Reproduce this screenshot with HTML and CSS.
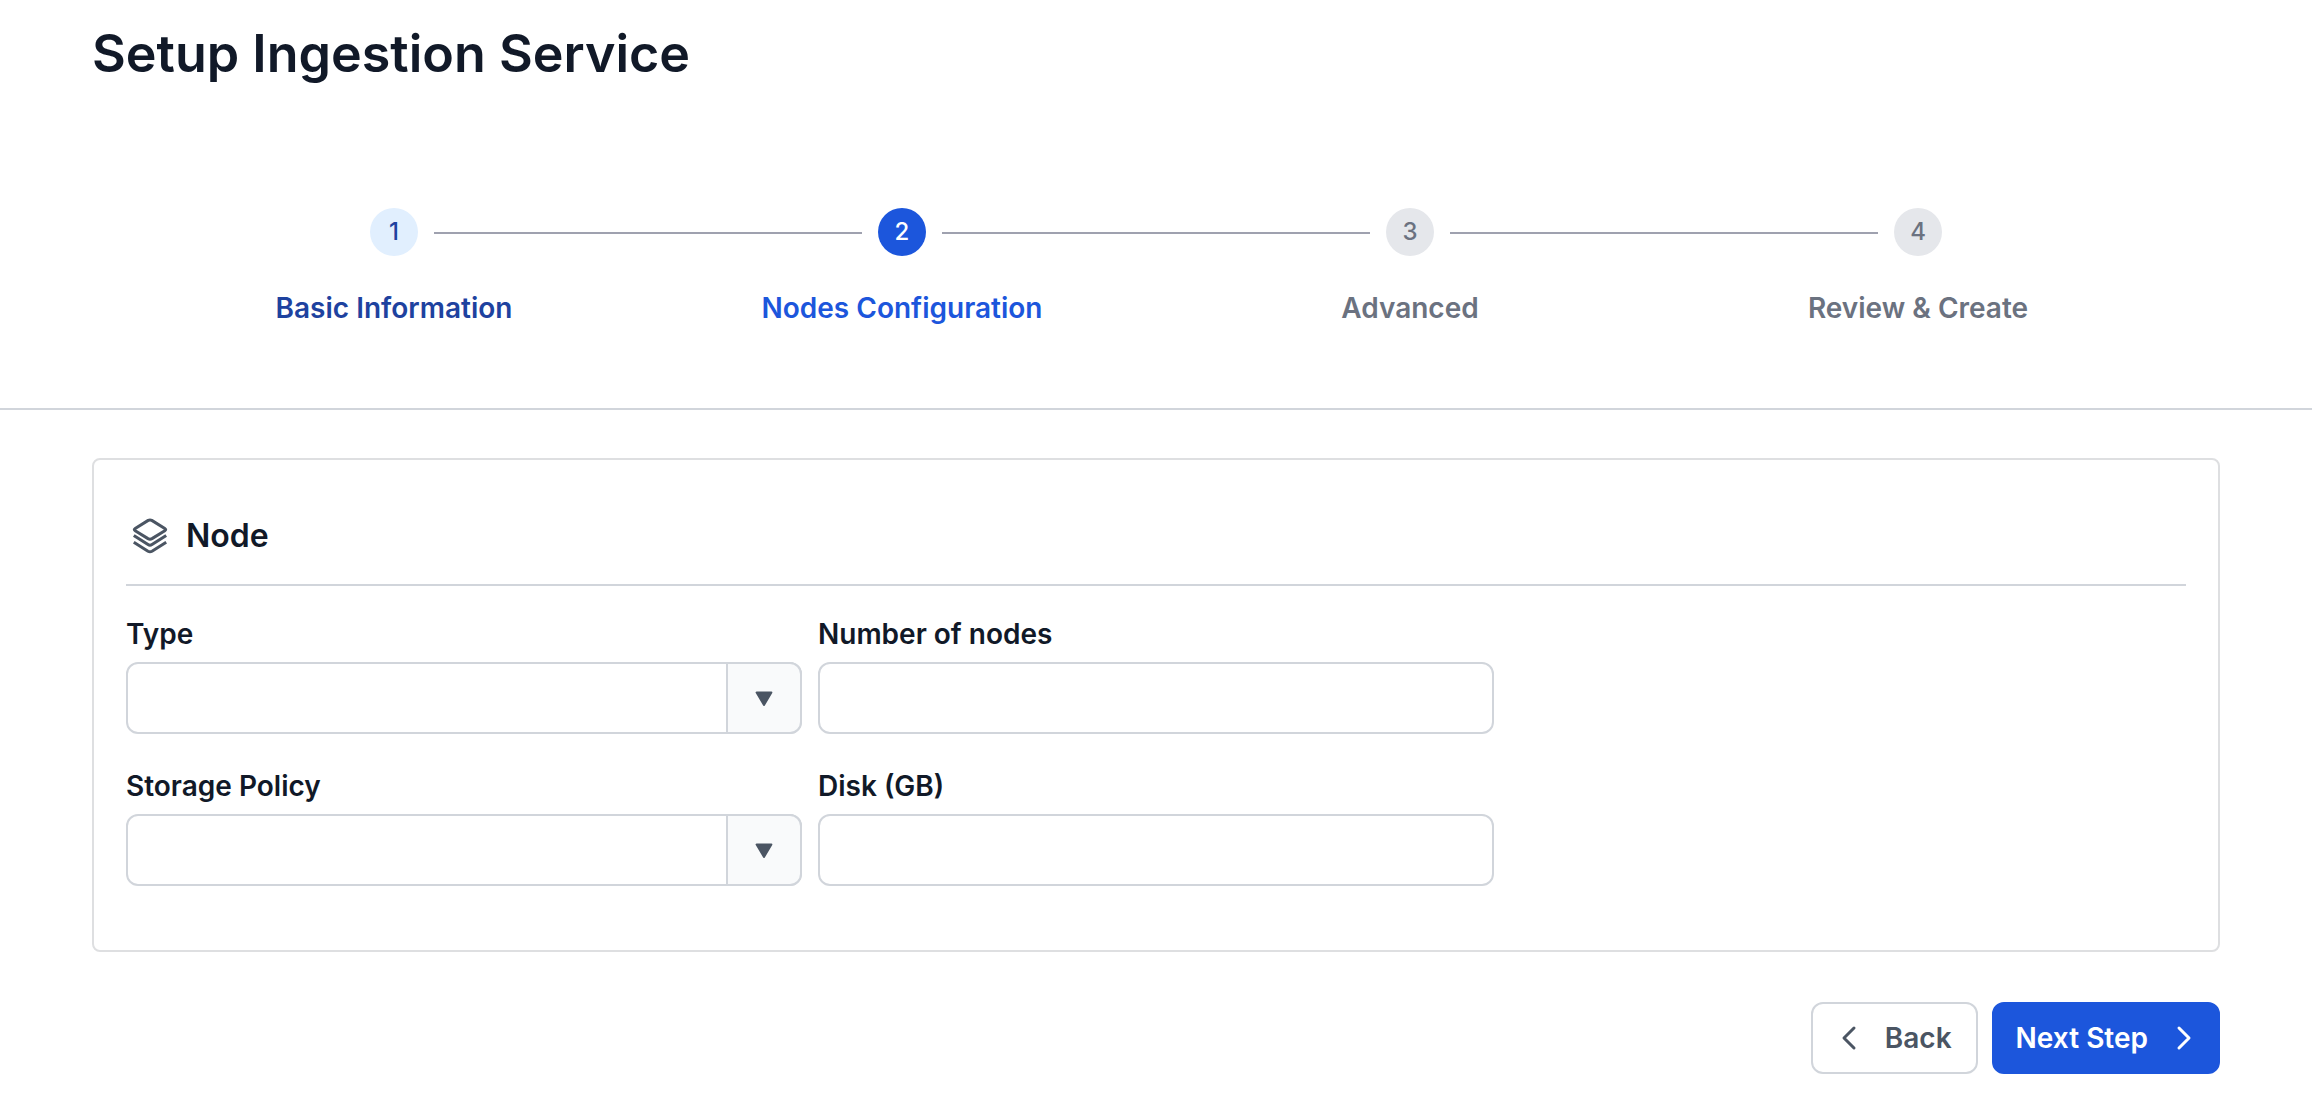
FILE: index.html
```html
<!DOCTYPE html>
<html lang="en">
<head>
<meta charset="utf-8">
<meta name="viewport" content="width=device-width, initial-scale=1">
<title>Setup Ingestion Service</title>
<link rel="stylesheet" href="styles.css">
</head>
<body>
<header class="page-header">
  <h1 class="page-title">Setup Ingestion Service</h1>
  <ol class="stepper">
    <li class="step step-done">
      <div class="step-track"><span class="step-number">1</span></div>
      <span class="step-label">Basic Information</span>
    </li>
    <li class="step step-current" aria-current="step">
      <div class="step-track"><span class="step-number">2</span></div>
      <span class="step-label">Nodes Configuration</span>
    </li>
    <li class="step">
      <div class="step-track"><span class="step-number">3</span></div>
      <span class="step-label">Advanced</span>
    </li>
    <li class="step">
      <div class="step-track"><span class="step-number">4</span></div>
      <span class="step-label">Review &amp; Create</span>
    </li>
  </ol>
</header>
<main class="page-main">
  <form class="form">
    <section class="card">
      <div class="card-header">
        <svg class="card-icon" viewBox="0 0 40 40" aria-hidden="true">
          <path d="M18.2 4.400 L5.200 12.400 Q3.400 13.600 5.200 14.800 L18 22.600 Q20 23.700 22 22.600 L34.800 14.800 Q36.600 13.600 34.800 12.400 L21.800 4.400 Q20 3.500 18.200 4.400 Z"/>
          <path d="M3.800 19.400 L18 28.600 Q20 29.900 22 28.600 L36.200 19.400"/>
          <path d="M3.800 26.200 L18 35.200 Q20 36.400 22 35.200 L36.200 26.200"/>
        </svg>
        <h2 class="card-title">Node</h2>
      </div>
      <div class="fields">
        <div class="field">
          <label class="field-label" for="type">Type</label>
          <div class="select">
            <select class="control" id="type"><option value=""></option></select>
            <span class="select-arrow"><svg class="arrow-icon" viewBox="0 0 18 16" aria-hidden="true"><path d="M1.600 2.500h14.800L9 15z"/></svg></span>
          </div>
        </div>
        <div class="field">
          <label class="field-label" for="nodes">Number of nodes</label>
          <input class="control" id="nodes" type="text" inputmode="numeric">
        </div>
        <div class="field field-row-start">
          <label class="field-label" for="policy">Storage Policy</label>
          <div class="select">
            <select class="control" id="policy"><option value=""></option></select>
            <span class="select-arrow"><svg class="arrow-icon" viewBox="0 0 18 16" aria-hidden="true"><path d="M1.600 2.500h14.800L9 15z"/></svg></span>
          </div>
        </div>
        <div class="field">
          <label class="field-label" for="disk">Disk (GB)</label>
          <input class="control" id="disk" type="text" inputmode="numeric">
        </div>
      </div>
    </section>
    <div class="actions">
      <button class="button button-back" type="button">
        <svg class="chevron" viewBox="0 0 32 32" aria-hidden="true"><path d="M21 6 L11 16 L21 26"/></svg>
        Back
      </button>
      <button class="button button-next" type="submit">
        Next Step
        <svg class="chevron" viewBox="0 0 32 32" aria-hidden="true"><path d="M11 6 L21 16 L11 26"/></svg>
      </button>
    </div>
  </form>
</main>
</body>
</html>
```
FILE: styles.css
```css
*, *::before, *::after { box-sizing: border-box; }

body {
  margin: 0;
  background: #fff;
  color: #111928;
  font-family: Inter, "Liberation Sans", sans-serif;
  font-size: 28px;
  line-height: 40px;
}

h1, h2 { margin: 0; font-weight: 600; }

.page-header {
  padding: 22px 92px 80px;
  border-bottom: 2px solid #d1d5db;
}

.page-title { font-size: 52px; line-height: 64px; }

.stepper {
  display: grid;
  grid-template-columns: repeat(4, 1fr);
  margin: 122px 0 0;
  padding: 0 48px;
  list-style: none;
}

.step {
  display: flex;
  flex-direction: column;
  gap: 32px;
  color: #6b7280;
  font-weight: 600;
  text-align: center;
}

.step-track {
  display: flex;
  align-items: center;
  gap: 16px;
}

/* Each step draws half of the connector on either side of its number. */
.step-track::before,
.step-track::after {
  content: "";
  flex: 1;
  height: 4px;
  border-bottom: 2px solid #9fa1af;
}

.step:first-child .step-track::before,
.step:last-child .step-track::after { visibility: hidden; }

.step-number {
  width: 48px;
  height: 48px;
  border-radius: 50%;
  background: #e5e7eb;
  font-size: 24px;
  line-height: 48px;
  font-weight: 500;
}

.step-done { color: #1e429f; }
.step-done .step-number { background: #e1effe; }
.step-current { color: #1c56dc; }
.step-current .step-number { background: #1c56dc; color: #fff; }

.page-main { padding: 48px 92px; }

.card {
  padding: 52px 32px 64px;
  border: 2px solid #dedfe1;
  border-radius: 8px;
}

.card-header {
  display: flex;
  align-items: center;
  gap: 16px;
  padding: 0 0 24px 4px;
  border-bottom: 2px solid #d1d5db;
}

.card-icon {
  width: 40px;
  height: 40px;
  fill: none;
  stroke: #4b5563;
  stroke-width: 3;
}

.card-title { font-size: 32px; line-height: 48px; }

.fields {
  display: grid;
  grid-template-columns: repeat(3, 1fr);
  gap: 32px 16px;
  padding-top: 28px;
}

.field {
  display: flex;
  flex-direction: column;
  gap: 8px;
}

.field-row-start { grid-column-start: 1; }

.field-label { font-weight: 600; }

.control {
  appearance: none;
  width: 100%;
  height: 72px;
  margin: 0;
  padding: 0 24px;
  border: 2px solid #d1d5db;
  border-radius: 12px;
  background: #fff;
  color: inherit;
  font: inherit;
}

.select { display: grid; }

.select > * { grid-area: 1 / 1; }

.select-arrow {
  display: flex;
  align-items: center;
  justify-content: center;
  justify-self: end;
  width: 76px;
  border: 2px solid #d1d5db;
  border-radius: 0 12px 12px 0;
  background: #f9fafb;
  pointer-events: none;
}

.arrow-icon {
  width: 18px;
  height: 16px;
  fill: #4b5563;
  stroke: #4b5563;
  stroke-width: 2;
  stroke-linejoin: round;
}

.actions {
  display: flex;
  justify-content: flex-end;
  gap: 14px;
  padding-top: 50px;
}

.button {
  display: flex;
  align-items: center;
  gap: 20px;
  height: 72px;
  border: 2px solid #d1d5db;
  border-radius: 12px;
  background: #fff;
  color: #4b5563;
  font: inherit;
  font-weight: 600;
  cursor: pointer;
}

.button-back { padding: 0 24px 0 20px; }

.button-next {
  padding: 0 18px 0 22px;
  border-color: #1c56dc;
  background: #1c56dc;
  color: #fff;
}

.chevron {
  width: 32px;
  height: 32px;
  fill: none;
  stroke: currentColor;
  stroke-width: 3;
  stroke-linecap: round;
  stroke-linejoin: round;
}
```
